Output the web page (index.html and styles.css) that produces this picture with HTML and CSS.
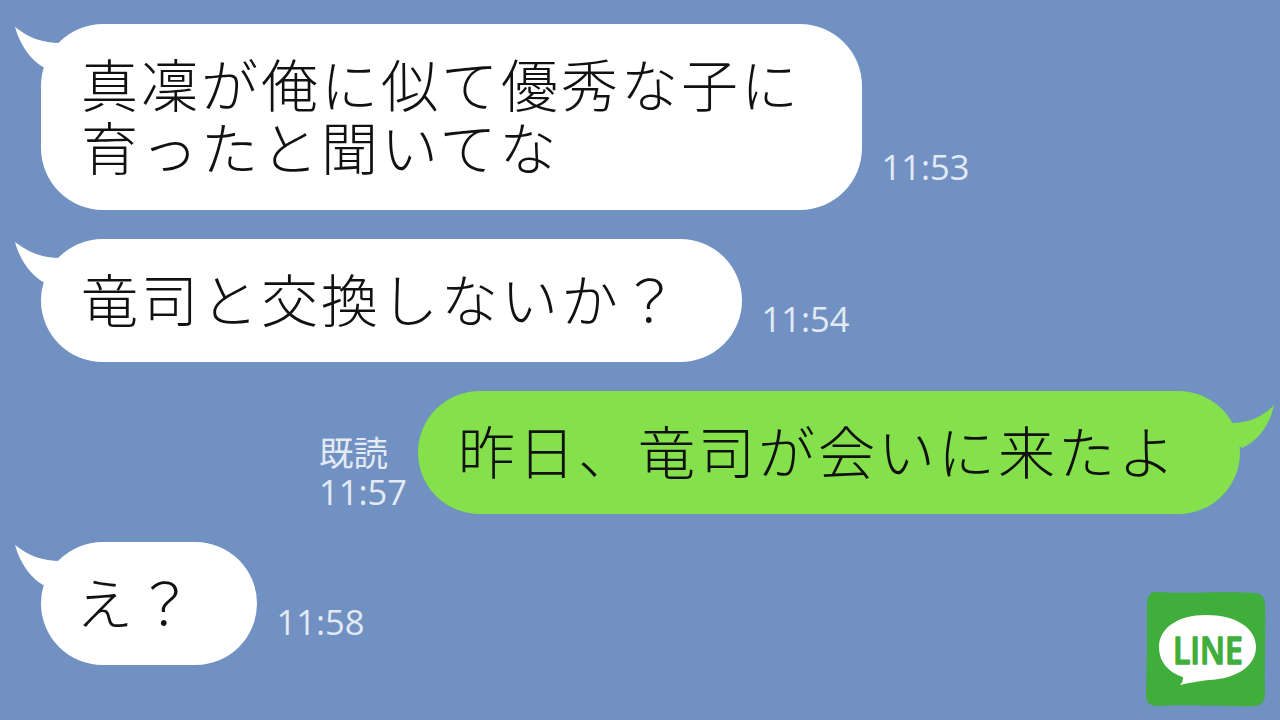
FILE: index.html
```html
<!DOCTYPE html>
<html lang="ja">
<head>
    <meta charset="UTF-8">
    <title>LINE</title>
    <link rel="stylesheet" href="styles.css">
</head>
<body>
    <div class="chat">
        <div class="row">
            <div class="bubble bubble-in">
                <svg class="tail tail-in" viewBox="0 0 60 50"><path d="M0 0C14 11 28 16 45 16L60 30L30 41C16 34 5 18 0 0Z"/></svg>
                <p>真凜が俺に似て優秀な子に<br>育ったと聞いてな</p>
            </div>
            <div class="meta">11:53</div>
        </div>
        <div class="row row-second">
            <div class="bubble bubble-in">
                <svg class="tail tail-in" viewBox="0 0 60 50"><path d="M0 0C14 11 28 16 45 16L60 30L30 41C16 34 5 18 0 0Z"/></svg>
                <p>竜司と交換しないか？</p>
            </div>
            <div class="meta">11:54</div>
        </div>
        <div class="row row-out">
            <div class="meta meta-out">既読<br>11:57</div>
            <div class="bubble bubble-out">
                <svg class="tail tail-out" viewBox="0 0 60 50"><path d="M60 0C50 11 36 18 18 18L10 30L28 43C44 36 56 20 60 0Z"/></svg>
                <p>昨日、竜司が会いに来たよ</p>
            </div>
        </div>
        <div class="row row-last">
            <div class="bubble bubble-in bubble-short">
                <svg class="tail tail-in" viewBox="0 0 60 50"><path d="M0 0C14 11 28 16 45 16L60 30L30 41C16 34 5 18 0 0Z"/></svg>
                <p>え？</p>
            </div>
            <div class="meta">11:58</div>
        </div>
    </div>
    <svg class="logo" viewBox="0 0 120 116">
        <path class="logo-bg" d="M9 1C40 3 80 0 109 2C116 3 119 7 119 13C120 40 118 75 119 103C119 110 115 115 108 115C80 116 40 113 10 115C4 115 0 111 0 104C1 75 1 40 1 12C1 6 4 1 9 1Z"/>
        <path class="logo-bubble" d="M60 24C90 24 110 37 110 56C110 74 92 88 62 89C54 90 42 92 34 94C36 92 37 90 37 86C24 82 13 72 13 56C13 37 32 24 60 24Z"/>
        <text class="logo-text" transform="translate(27 73) scale(.84 1)">LINE</text>
    </svg>
</body>
</html>
```

FILE: styles.css
```css
* {box-sizing: border-box;}
body {
    margin: 0;
    width: 1280px;
    height: 720px;
    overflow: hidden;
    background-color: #7191c2;
    font-family: "Noto Sans CJK JP", sans-serif;
    position: relative;
}
.chat {
    padding: 24px 40px 0 41px;
    display: flex;
    flex-direction: column;
}
.row {
    display: flex;
    align-items: flex-end;
}
.row-second {
    margin-top: 29px;
}
.row-out {
    margin-top: 29px;
    justify-content: flex-end;
}
.row-last {
    margin-top: 28px;
}
.bubble {
    position: relative;
    padding: 27px 61px 33px 40px;
    border-radius: 62px;
    color: #111;
}
.bubble-short {
    padding-left: 35px;
}
.bubble p {
    margin: 0;
    font-size: 57px;
    font-weight: 300;
    letter-spacing: 3px;
    line-height: 63px;
    white-space: nowrap;
}
.bubble-in {
    background-color: #fff;
}
.bubble-out {
    background-color: #84e04b;
    padding-right: 62px;
}
.tail {
    position: absolute;
    width: 60px;
    height: 50px;
}
.tail-in {
    top: 3px;
    left: -26px;
    fill: #fff;
}
.tail-out {
    top: 14px;
    right: -34px;
    fill: #84e04b;
}
.meta {
    margin: 0 0 24px 19.5px;
    color: #e3eaf4;
    font-family: "Open Sans", "Noto Sans CJK JP", sans-serif;
    font-size: 34.5px;
    line-height: 38px;
}
.meta-out {
    margin: 0 11px 3px 0;
    line-height: 39px;
}
.logo {
    position: absolute;
    left: 1146px;
    top: 591px;
    width: 120px;
    height: 116px;
}
.logo-bg {
    fill: #3fae3a;
}
.logo-bubble {
    fill: #fff;
}
.logo-text {
    fill: #3fae3a;
    stroke: #3fae3a;
    stroke-width: 1.5px;
    stroke-linejoin: round;
    font-family: "Open Sans", sans-serif;
    font-size: 38px;
    font-weight: 600;
}
```
